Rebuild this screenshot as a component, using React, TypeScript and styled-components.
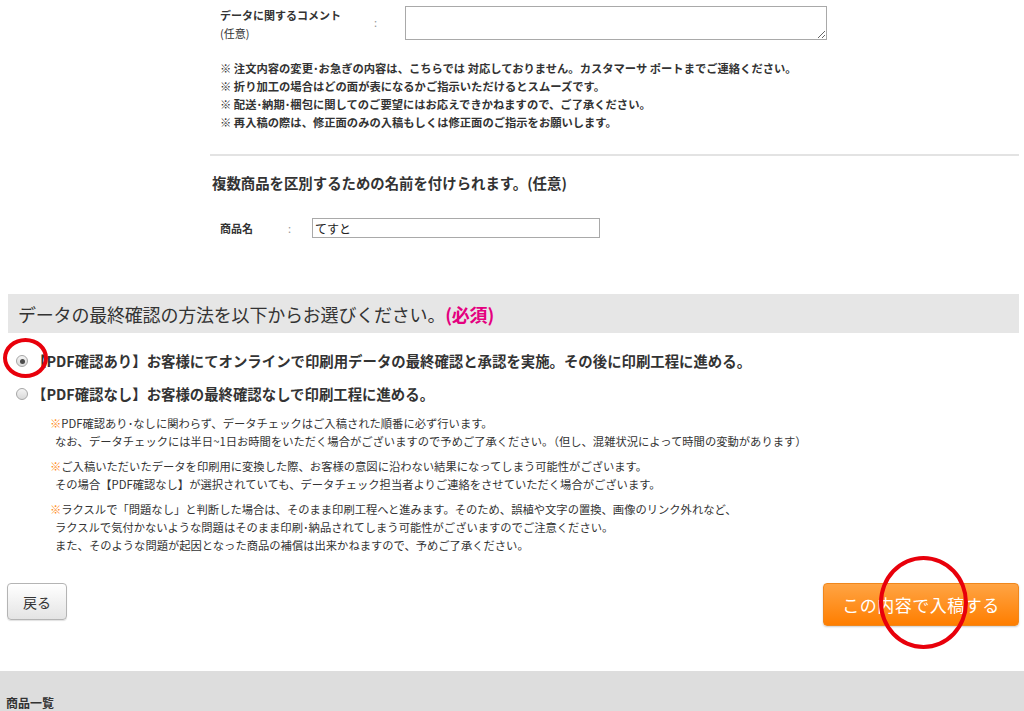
import React from "react";
import styled, { createGlobalStyle } from "styled-components";

const GlobalStyle = createGlobalStyle`
  html, body {
    margin: 0;
    padding: 0;
    background: #ffffff;
  }
  body {
    font-family: "Noto Sans CJK JP", "Noto Sans", "Liberation Sans", sans-serif;
    color: #333333;
  }
`;

const Page = styled.div`
  position: relative;
  width: 1024px;
  height: 711px;
  overflow: hidden;
`;

const UpperSection = styled.div`
  display: flex;
  flex-direction: column;
  margin: 0 5px 0 210px;
  padding-top: 6px;
`;

const CommentRow = styled.div`
  display: flex;
  align-items: flex-start;
  padding-left: 10px;
`;

const FieldLabel = styled.div<{ $width: number }>`
  width: ${(p) => p.$width}px;
  font-size: 11px;
  font-weight: 700;
  line-height: 18px;
  color: #333;
`;

const Optional = styled.span`
  display: block;
  font-weight: 400;
`;

const Colon = styled.div<{ $width: number; $top?: number }>`
  width: ${(p) => p.$width}px;
  font-size: 11px;
  color: #999;
  line-height: 18px;
  padding-top: ${(p) => p.$top ?? 0}px;
`;

const CommentBox = styled.textarea`
  width: 422px;
  height: 34px;
  box-sizing: border-box;
  border: 1px solid #a9a9a9;
  font-family: inherit;
  font-size: 12px;
  padding: 2px;
  margin: 0;
`;

const NoteList = styled.div`
  display: flex;
  flex-direction: column;
  padding: 17px 0 0 10px;
`;

const BoldNote = styled.div`
  font-size: 11.3px;
  font-weight: 700;
  line-height: 18px;
  color: #333;
  white-space: nowrap;
`;

const Divider = styled.div`
  height: 2px;
  background: #e3e3e3;
  margin-top: 23px;
`;

const SubHeading = styled.div`
  font-size: 14.4px;
  font-weight: 700;
  line-height: 20px;
  margin-top: 17px;
  padding-left: 2px;
  color: #333;
`;

const NameRow = styled.div`
  display: flex;
  align-items: center;
  padding: 25px 0 0 10px;
`;

const NameInput = styled.input`
  width: 288px;
  height: 20px;
  box-sizing: border-box;
  border: 1px solid #a9a9a9;
  font-family: inherit;
  font-size: 12px;
  padding: 0 2px;
  margin: 0;
  color: #222;
`;

const ConfirmSection = styled.div`
  display: flex;
  flex-direction: column;
  margin: 56px 5px 0 8px;
`;

const HeadingBar = styled.div`
  background: #e6e6e6;
  height: 39px;
  display: flex;
  align-items: center;
  padding-left: 10px;
  font-size: 18px;
  color: #333;
  letter-spacing: -0.2px;
`;

const Required = styled.span`
  color: #e4007f;
  font-weight: 700;
`;

const RadioList = styled.div`
  display: flex;
  flex-direction: column;
  gap: 15px;
  padding: 19px 0 0 8px;
`;

const RadioRow = styled.label`
  display: flex;
  align-items: center;
  gap: 4px;
  font-size: 14.4px;
  font-weight: 700;
  line-height: 18px;
  color: #333;
  white-space: nowrap;
`;

const RadioDot = styled.span<{ $checked?: boolean }>`
  width: 12px;
  height: 12px;
  box-sizing: border-box;
  border-radius: 50%;
  border: 1px solid #a6a6a6;
  background: linear-gradient(#f4f4f4, #d9d9d9);
  display: flex;
  align-items: center;
  justify-content: center;
  &::after {
    content: "";
    width: 5px;
    height: 5px;
    border-radius: 50%;
    background: ${(p) => (p.$checked ? "#4a4a4a" : "transparent")};
  }
`;

const InfoList = styled.div`
  display: flex;
  flex-direction: column;
  gap: 7px;
  padding: 11px 0 0 42px;
`;

const InfoBlock = styled.div`
  font-size: 11.3px;
  line-height: 18px;
  color: #333;
  white-space: nowrap;
`;

const InfoLine = styled.div<{ $indent?: boolean }>`
  padding-left: ${(p) => (p.$indent ? "5px" : "0")};
`;

const Mark = styled.span`
  color: #ff8c1a;
`;

const ButtonRow = styled.div`
  display: flex;
  justify-content: space-between;
  align-items: flex-start;
  margin: 29px 5px 0 7px;
`;

const BackButton = styled.button`
  width: 60px;
  height: 37px;
  border: 1px solid #b4b4b4;
  border-radius: 4px;
  background: linear-gradient(#ffffff, #e4e4e4);
  box-shadow: 0 1px 1px rgba(0, 0, 0, 0.12);
  font-family: inherit;
  font-size: 14px;
  color: #333;
  padding: 0;
`;

const SubmitButton = styled.button`
  width: 196px;
  height: 43px;
  border: 1px solid #f0871c;
  border-radius: 4px;
  background: linear-gradient(#ffa444, #ff7e00);
  box-shadow: 0 1px 2px rgba(0, 0, 0, 0.2);
  font-family: inherit;
  font-size: 17px;
  letter-spacing: 0.5px;
  color: #ffffff;
  padding: 0;
`;

const FooterBand = styled.div`
  margin-top: 45px;
  background: #dddddd;
  height: 60px;
  padding: 24px 0 0 6px;
  box-sizing: border-box;
  font-size: 12px;
  line-height: 16px;
  font-weight: 700;
  color: #333;
`;

const Annotation = styled.div<{ $x: number; $y: number; $w: number; $h: number }>`
  position: absolute;
  left: ${(p) => p.$x}px;
  top: ${(p) => p.$y}px;
  width: ${(p) => p.$w}px;
  height: ${(p) => p.$h}px;
  box-sizing: border-box;
  border: 4px solid #e8000b;
  border-radius: 50%;
  pointer-events: none;
`;

const notes = [
  "※ 注文内容の変更･お急ぎの内容は、こちらでは 対応しておりません。カスタマーサ ポートまでご連絡ください。",
  "※ 折り加工の場合はどの面が表になるかご指示いただけるとスムーズです。",
  "※ 配送･納期･梱包に関してのご要望にはお応えできかねますので、ご了承ください。",
  "※ 再入稿の際は、修正面のみの入稿もしくは修正面のご指示をお願いします。",
];

const infoBlocks = [
  [
    "PDF確認あり･なしに関わらず、データチェックはご入稿された順番に必ず行います。",
    "なお、データチェックには半日~1日お時間をいただく場合がございますので予めご了承ください。（但し、混雑状況によって時間の変動があります）",
  ],
  [
    "ご入稿いただいたデータを印刷用に変換した際、お客様の意図に沿わない結果になってしまう可能性がございます。",
    "その場合【PDF確認なし】が選択されていても、データチェック担当者よりご連絡をさせていただく場合がございます。",
  ],
  [
    "ラクスルで「問題なし」と判断した場合は、そのまま印刷工程へと進みます。そのため、誤植や文字の置換、画像のリンク外れなど、",
    "ラクスルで気付かないような問題はそのまま印刷･納品されてしまう可能性がございますのでご注意ください。",
    "また、そのような問題が起因となった商品の補償は出来かねますので、予めご了承ください。",
  ],
];

export default function App() {
  return (
    <Page>
      <GlobalStyle />
      <UpperSection>
        <CommentRow>
          <FieldLabel $width={154}>
            データに関するコメント
            <Optional>(任意)</Optional>
          </FieldLabel>
          <Colon $width={31} $top={7}>:</Colon>
          <CommentBox />
        </CommentRow>
        <NoteList>
          {notes.map((n) => (
            <BoldNote key={n}>{n}</BoldNote>
          ))}
        </NoteList>
        <Divider />
        <SubHeading>複数商品を区別するための名前を付けられます。(任意)</SubHeading>
        <NameRow>
          <FieldLabel $width={68}>商品名</FieldLabel>
          <Colon $width={24}>:</Colon>
          <NameInput defaultValue="てすと" />
        </NameRow>
      </UpperSection>

      <ConfirmSection>
        <HeadingBar>
          データの最終確認の方法を以下からお選びください。<Required>(必須)</Required>
        </HeadingBar>
        <RadioList>
          <RadioRow>
            <RadioDot $checked />
            【PDF確認あり】お客様にてオンラインで印刷用データの最終確認と承認を実施。その後に印刷工程に進める。
          </RadioRow>
          <RadioRow>
            <RadioDot />
            【PDF確認なし】お客様の最終確認なしで印刷工程に進める。
          </RadioRow>
        </RadioList>
        <InfoList>
          {infoBlocks.map((block, i) => (
            <InfoBlock key={i}>
              {block.map((line, j) => (
                <InfoLine key={j} $indent={j > 0}>
                  {j === 0 && <Mark>※</Mark>}
                  {line}
                </InfoLine>
              ))}
            </InfoBlock>
          ))}
        </InfoList>
      </ConfirmSection>

      <ButtonRow>
        <BackButton>戻る</BackButton>
        <SubmitButton>この内容で入稿する</SubmitButton>
      </ButtonRow>

      <FooterBand>商品一覧</FooterBand>

      <Annotation $x={3} $y={338} $w={45} $h={40} />
      <Annotation $x={879} $y={556} $w={89} $h={93} />
    </Page>
  );
}
